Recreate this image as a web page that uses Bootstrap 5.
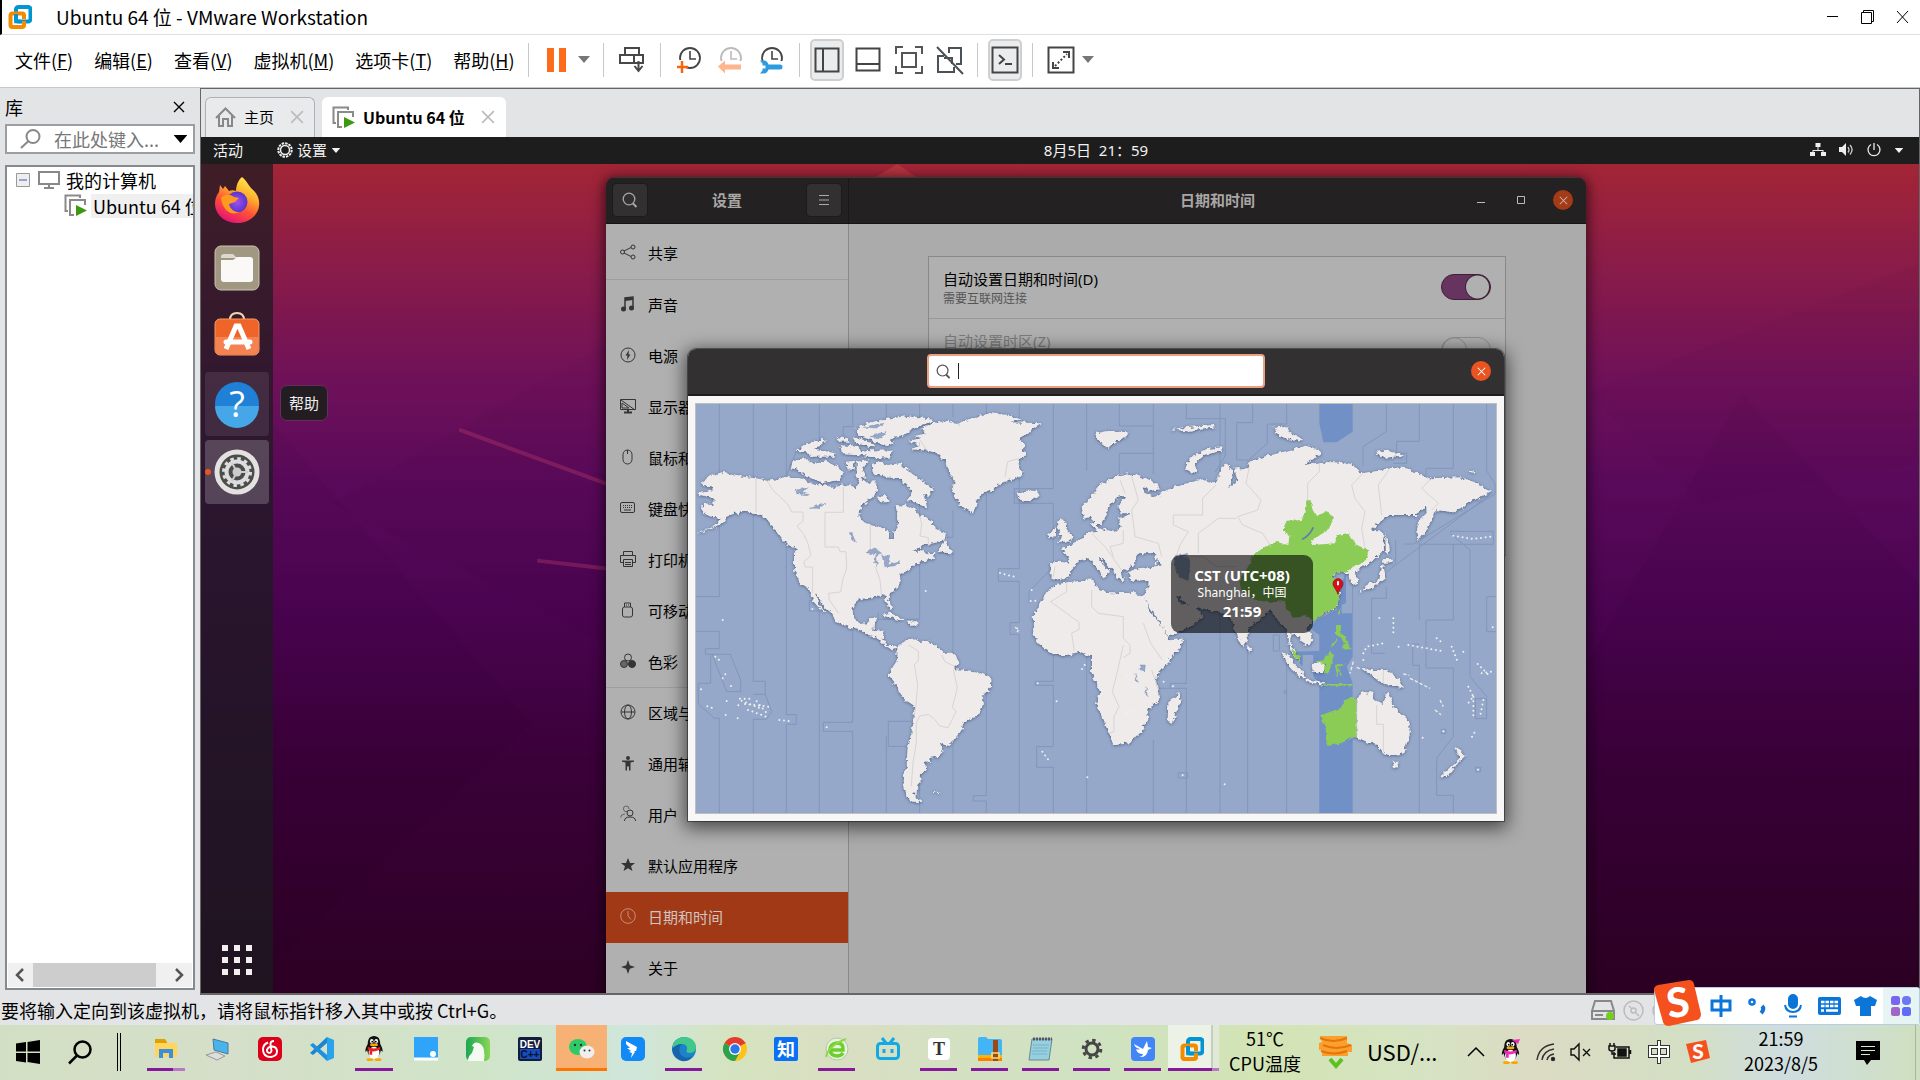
<!DOCTYPE html>
<html lang="zh-CN">
<head>
<meta charset="utf-8">
<meta name="viewport" content="width=device-width, initial-scale=1">
<title>Ubuntu 64 位 - VMware Workstation</title>
<link href="https://cdn.jsdelivr.net/npm/bootstrap@5.3.0/dist/css/bootstrap.min.css" rel="stylesheet">
<style>
:root{--win:"Open Sans","Noto Sans CJK SC",sans-serif;--gst:"Noto Sans","Noto Sans CJK SC",sans-serif}
body{font-family:var(--win);font-size:18px;line-height:24px;color:#000;background:#e3e4e6;overflow:hidden}
svg{display:block;flex:none;overflow:visible}
button{border:0;background:none;padding:0;color:inherit;font:inherit}
a{color:inherit;text-decoration:none}
.titlebar{height:35px;border-bottom:1px solid #dfdfdf;background:#fff;border-left:2px solid #000;padding-left:6px}
.titlebar span,.menubar a,.treetext,.hint,.searchfield{font-family:"Noto Sans CJK SC",sans-serif}
.titlebar span{font-size:19px}
.winctl{gap:20px;padding-right:10px}
.menubar{height:53px;background:#fff;border-bottom:1px solid #c8c8c8;padding-bottom:2px}
.menus{gap:21px;padding-left:15px;width:528px}
.vsep{width:1px;height:34px;background:#c9c9c9;flex:none}
.toolset{display:flex;align-items:center;gap:7px;padding:0 11px}
.toolset.tight{padding:0 10px}
.toolset.drop{gap:2px}
.tool{width:34px;height:42px;display:flex;align-items:center;justify-content:center}
.caretbtn{width:16px;display:flex;justify-content:center}
.tool.pressed{background:#ebecee;border:2px solid #cfcfcf;border-radius:5px}
.library{width:200px;padding:6px 5px 5px}
.libhead{height:26px;padding-right:6px}
.searchwrap{height:30px;border:2px solid #9b9fa4;background:#fff;padding:0 5px 0 13px;margin-bottom:11px;gap:13px}
.searchfield{border:0;outline:0;width:104px;font-size:18px;padding:0;color:#777;line-height:24px}
.searchfield::placeholder{color:#777;opacity:1}
.treebox{border:2px solid #858a91;background:#fff;overflow:hidden}
.treerow{height:26px;white-space:nowrap}
.pcname{padding-left:2px}
.sel{background:#f0f0f0;padding-left:2px}
.hbar{height:24px;background:#f0f0f0;margin:0 1px 1px}
.hthumb{width:123px;background:#cdcdcd}
.console{border:1px solid #666;border-bottom-width:2px;border-left-width:1px}
.tabstrip{height:48px;padding:8px 0 0 4px;gap:7px;font-size:15px}
.vmtab{height:40px;border:1px solid #aeb1b4;border-bottom:0;border-radius:6px 6px 0 0;background:#e9eaec;padding:0 10px 0 9px;font-family:"Noto Sans CJK SC",sans-serif}
.vmtab.on{background:#fff;border-color:#fff;font-weight:700;font-size:16px}
.guest{font-family:var(--gst);font-size:15px;line-height:20px}
.gtop{height:27px;background:#1d1d1d;color:#f2f2f2;display:grid;grid-template-columns:72px 1fr auto 1fr;align-items:center}
.gtray{gap:13px;padding-right:15px}
.desk{background:linear-gradient(180deg,#a32536 0,#8a1c48 12%,#6f1159 26%,#5a0a5a 38%,#4b0451 53%,#3a0139 72%,#2d0024 100%);overflow:hidden;position:relative}
.wallart{position:absolute;inset:0;width:100%;height:100%}
.dock{width:72px;background:rgba(29,27,32,.74);padding:4px 4px 18px;gap:4px;position:relative}
.dockitem{width:64px;height:64px;border-radius:4px;display:flex;align-items:center;justify-content:center;position:relative}
.dockitem.hov{background:rgba(255,255,255,.09)}
.dockitem.act{background:rgba(255,255,255,.2)}
.dockitem.act::before{content:"";position:absolute;left:0;width:6px;height:6px;border-radius:50%;background:#e95420}
.tipbox{position:absolute;left:79px;top:221px;z-index:3;background:#231d21;color:#eee;border:1px solid #60305c;border-radius:7px;padding:7px 8px;white-space:nowrap}
.work{position:relative;min-width:0}
.setwin{width:980px;margin:13px auto 0;border-radius:9px 9px 0 0;overflow:hidden;box-shadow:0 3px 12px 3px rgba(0,0,0,.55);position:relative;height:calc(100% - 13px)}
.sethead{height:47px;background:#242122;color:#a9a7a5;font-weight:700;border-bottom:1px solid #161415;border-top:1px solid #3b3839}
.hleft{width:243px;padding:0 7px;border-right:1px solid #191718}
.hbtn{width:34px;height:32px;border-radius:4px;background:#333031;display:flex;align-items:center;justify-content:center;box-shadow:0 0 0 1px #1d1b1c}
.winbtns{padding-right:13px}
.closebtn{width:20px;height:20px;border-radius:50%;background:#a33b17;display:flex;align-items:center;justify-content:center}
.slist{width:243px;background:#b0b0b0;border-right:1px solid #898989;padding-top:3px;flex:none}
.srow{height:51px;padding:0 14px;display:flex;align-items:center;gap:12px;color:#000;white-space:nowrap}
.srow.first{height:53px}
.srow svg{color:#343434;margin-top:-2px}
.line{border-bottom:1px solid #9e9e9e}
.srow.cur{background:#a13916;color:#cfc4c0}
.srow.cur svg{color:#c88e7a}
.pane{background:#ababab;padding:32px 80px 0 79px}
.optbox{border:1px solid #888;background:#b0b0b0;height:300px}
.optrow{height:62px;padding:0 14px;border-bottom:1px solid #999}
.optrow label{padding-top:2px}
.optrow.dim{color:#7b7b7b;padding-top:10px}
.form-switch .gsw{width:50px;height:26px;margin:0;border:1px solid #3d2139;background-color:#66345e;background-size:25px 25px;background-image:radial-gradient(circle at 50% 50%,#b0b0b0 11px,#3d2139 12px,transparent 13px);box-shadow:none;display:block}
.form-switch .gsw.off{background-color:#b0b0b0;border-color:#8f8f8f;opacity:1;background-image:radial-gradient(circle at 50% 50%,#b0b0b0 11px,#8f8f8f 12px,transparent 13px)}
.tzdlg{position:absolute;left:50%;top:185px;width:816px;margin-left:-408px;border-radius:8px 8px 0 0;background:#f7f7f7;box-shadow:0 0 0 1px rgba(0,0,0,.4),0 4px 18px 3px rgba(0,0,0,.6);z-index:2}
.tzhead{height:47px;background:#333031;border-radius:8px 8px 0 0;border-bottom:2px solid #1e1c1d;display:grid;grid-template-columns:1fr 338px 1fr;align-items:center}
.tzsearch{height:34px;background:#fff;border:2px solid #ee9f82;border-radius:4px;padding-left:7px;gap:7px}
.tzsearch input{border:0;outline:0;width:290px;font-size:15px;padding:0;height:22px}
.tzclose{background:#e95420;margin-right:13px}
.caretbar{width:1px;height:16px;background:#222}
.mapwrap{margin:7px;border:1px solid #c0bfbd;position:relative;overflow:hidden}
.mapwrap>svg{width:100%;height:auto}
.tztip{position:absolute;left:475px;top:151px;width:142px;height:78px;border-radius:9px;background:rgba(0,0,0,.6);color:#fff;padding:11px 0;text-align:center;line-height:18px}
.tztip span,.tztip b{display:block}
.sub{font-size:12px}
.statusbar{height:30px;position:relative}
.hint{padding-left:1px}
.devs{margin-right:247px}
.ime{position:absolute;right:0;top:-8px;height:38px;width:266px;z-index:5}
.imebody{background:#fff;border:1px solid #b8cde0;border-radius:3px;justify-content:flex-end}
.imebody button{width:36px;height:36px;display:flex;align-items:center;justify-content:center;color:#0b75d8;flex:none}
.imelogo{position:absolute;left:0;top:-7px}
.taskbar{height:55px;background:linear-gradient(90deg,#d3dfc4 0,#d5dfc9 12%,#d0e4c8 25%,#cfe6da 33%,#d5e3c0 38%,#d9dfc2 44%,#cfe2c2 56%,#d3e4b4 66%,#d6e3c3 74%,#dbdbc3 80%,#d3dfc4 88%,#cfdde0 93%,#cfe0c0 100%)}
.taskbar>*{flex:none}
.startarea{width:140px;padding-bottom:2px}
.tb{width:51px;height:46px;border-bottom:3px solid transparent;position:relative;display:flex;align-items:center;justify-content:center;padding-top:4px}
.tb.pin{width:52px}
.tb.open::after{content:"";position:absolute;left:7px;right:7px;bottom:-3px;height:3px;background:#86189a}
.tb.many::after{background:linear-gradient(90deg,#86189a 68%,#b778c5 68%)}
.tb.alert-on{background:#f7b174;border-color:#fd7500}
.tb.front{background:linear-gradient(90deg,#ecf2e5 43px,#c5cfc0 43px,#c5cfc0 45px,#dfe9d5 45px)}
.tb.front::after{left:0;right:0;background:linear-gradient(90deg,#86189a 44px,#b778c5 44px)}
.trayt{font-family:"Noto Sans CJK SC",sans-serif;font-size:18px;line-height:25px;text-align:center;padding-top:1px}
.news{width:156px;padding:0 0 4px 8px;gap:14px;font-family:"Noto Sans CJK SC",sans-serif;font-size:22px}
.trayicons{width:243px;color:#111;padding-bottom:2px}
</style>
<script src="https://cdn.jsdelivr.net/npm/bootstrap@5.3.0/dist/js/bootstrap.bundle.min.js"></script>
</head>
<body class="d-flex flex-column vh-100">
<svg width="0" height="0" class="position-absolute" aria-hidden="true">
<defs>
<symbol id="vmw" viewBox="0 0 24 24"><rect x="8" y="2" width="14.500" height="14.500" rx="2.500" fill="none" stroke="#0095d3" stroke-width="4"/><path d="M8 8.500H4A2 2 0 0 0 2.500 10v10A2 2 0 0 0 4 22h10a2 2 0 0 0 2-2v-4" fill="none" stroke="#f38b00" stroke-width="4"/><path d="M8 8.500h6a2 2 0 0 1 2 2V14" fill="none" stroke="#f38b00" stroke-width="4"/><path d="M8 9v7.500h5" fill="none" stroke="#0095d3" stroke-width="3.600"/></symbol>
<symbol id="mag" viewBox="0 0 16 16"><circle cx="7" cy="7" r="5.800" fill="none" stroke="currentColor" stroke-width="1.300"/><path d="M11 11.500l3.500 3.500" stroke="currentColor" stroke-width="2"/></symbol>
<symbol id="vmrun" viewBox="0 0 23 23"><path d="M4 17H1.500V1.500H16V4" fill="none" stroke="#8a8a8a" stroke-width="2"/><path d="M10 21H6V6h15v5" fill="none" stroke="#8a8a8a" stroke-width="2"/><path d="M12 11l11 5.500L12 22z" fill="#3d9a10"/></symbol>
<symbol id="ex" viewBox="0 0 12 12"><path d="M1 1l10 10M11 1L1 11" stroke="currentColor" stroke-width="1.400"/></symbol>
<symbol id="clk" viewBox="0 0 24 28"><circle cx="13" cy="12" r="10" fill="none" stroke="currentColor" stroke-width="1.800"/><path d="M13 5v8h6" fill="none" stroke="currentColor" stroke-width="1.600"/></symbol>
<symbol id="down" viewBox="0 0 12 7"><path d="M0 0h12L6 7z" fill="currentColor"/></symbol>
<symbol id="penguin" viewBox="0 0 20 28"><path d="M10 0c5 0 7 4 7 9 2 3 3 7 2.600 9l-2-2c-.5 4-3 9-7.600 9S3 20 2.400 16l-2 2C0 16 1 12 3 9c0-5 2-9 7-9z" fill="#111"/><ellipse cx="10" cy="19" rx="6" ry="7" fill="#fff"/><ellipse cx="7.500" cy="6" rx="2" ry="2.600" fill="#fff"/><ellipse cx="12.500" cy="6" rx="2" ry="2.600" fill="#fff"/><circle cx="8" cy="6.300" r="1"/><circle cx="12" cy="6.300" r="1"/><ellipse cx="10" cy="10" rx="4.500" ry="1.500" fill="#f7a700"/><path d="M3 12q7 4 14 0v3q-7 3-9 2v4H5v-5l-2-1z" fill="currentColor"/><ellipse cx="5.500" cy="26.500" rx="4" ry="1.500" fill="#f7a700"/><ellipse cx="14.500" cy="26.500" rx="4" ry="1.500" fill="#f7a700"/></symbol>
</defs>
</svg>

<header class="titlebar d-flex align-items-center justify-content-between">
 <div class="d-flex align-items-center"><svg width="24" height="24" class="me-4"><use href="#vmw"/></svg><span>Ubuntu 64 位 - VMware Workstation</span></div>
 <div class="winctl d-flex align-items-center">
  <button aria-label="最小化"><svg width="15" height="14"><path d="M2 6.500h11" stroke="#000"/></svg></button>
  <button aria-label="还原"><svg width="15" height="14"><path d="M3.500 2.500v-2h10v11h-2M1.500 2.500h10v11h-10z" fill="none" stroke="#000"/></svg></button>
  <button aria-label="关闭"><svg width="15" height="14"><path d="M2 1l11 12M13 1L2 13" stroke="#000"/></svg></button>
 </div>
</header>

<nav class="menubar d-flex align-items-center">
 <div class="menus d-flex"><a href="#">文件(<u>F</u>)</a><a href="#">编辑(<u>E</u>)</a><a href="#">查看(<u>V</u>)</a><a href="#">虚拟机(<u>M</u>)</a><a href="#">选项卡(<u>T</u>)</a><a href="#">帮助(<u>H</u>)</a></div>
 <i class="vsep"></i>
 <div class="toolset drop">
 <button class="tool" aria-label="挂起"><svg width="20" height="26"><path d="M0 1h7v24H0zM12 1h7v24h-7z" fill="#fd6b1c"/></svg></button>
 <button class="caretbtn" aria-label="电源选项"><svg width="12" height="7" color="#777"><use href="#down"/></svg></button>
 </div>
 <i class="vsep"></i>
 <div class="toolset">
 <button class="tool" aria-label="发送按键"><svg width="26" height="26" fill="none" stroke="#484848" stroke-width="2"><path d="M6 1h14v7H6zM1 8h14v8H1zM15 8h9v8h-9M19.500 14v10M15.500 19l4 5 4-5"/></svg></button>
 </div>
 <i class="vsep"></i>
 <div class="toolset">
 <button class="tool" aria-label="拍摄快照"><svg width="24" height="28" color="#444"><use href="#clk"/><path d="M0 14h9v10H0z" fill="#fff"/><path d="M5 15v12M0 21h11" stroke="#f5660f" stroke-width="2.500"/></svg></button>
 <button class="tool" aria-label="恢复快照"><svg width="24" height="28" color="#bbb"><use href="#clk"/><path d="M0 15h24v11H0z" fill="#fff"/><path d="M0 20.500l7-6v4h16v5H7v4z" fill="#ffb48c"/></svg></button>
 <button class="tool" aria-label="管理快照"><svg width="24" height="28" color="#444"><use href="#clk"/><path d="M0 15h24v11H0z" fill="#fff"/><path d="M1 14.500h4q3 0 4.500 4H21a2.500 2.500 0 0 1 0 5H9.500q-1.500 4-4.500 4H1l2.500-3v-2h3v-3h-3v-2z" fill="#2d9be0"/></svg></button>
 </div>
 <i class="vsep"></i>
 <div class="toolset tight">
 <button class="tool pressed" aria-label="显示库"><svg width="26" height="26" fill="none" stroke="#444" stroke-width="2"><path d="M1.500 1.500h23v23h-23zM9 1.500v23"/></svg></button>
 <button class="tool" aria-label="缩略图栏"><svg width="26" height="26" fill="none" stroke="#444" stroke-width="2"><path d="M1.500 1.500h23v22h-23zM1 17h24"/></svg></button>
 <button class="tool" aria-label="全屏"><svg width="28" height="28" fill="none" stroke="#555" stroke-width="2"><path d="M1 8V1h7M20 1h7v7M27 20v7h-7M8 27H1v-7M7 7h14v14H7z"/></svg></button>
 <button class="tool" aria-label="Unity"><svg width="28" height="28" fill="none" stroke="#4a5257" stroke-width="2"><path d="M1 1l26 27M12 2h13v16h-5M13 7V2M8 10H2v16h16v-5M8 12h8v6"/></svg></button>
 </div>
 <i class="vsep"></i>
 <div class="toolset tight">
 <button class="tool pressed" aria-label="控制台"><svg width="28" height="28" fill="none" stroke="#444" stroke-width="2"><path d="M1.500 1.500h25v25h-25zM8 9l5 4.500L8 18M14 18h7"/></svg></button>
 </div>
 <i class="vsep"></i>
 <div class="toolset drop">
 <button class="tool" aria-label="拉伸"><svg width="28" height="28" fill="none" stroke="#444" stroke-width="2"><path d="M1.500 1.500h25v25h-25zM16 6h6v6M6 16v6h6"/><path d="M8 20L20 8" stroke-dasharray="2 2"/></svg></button>
 <button class="caretbtn" aria-label="拉伸选项"><svg width="12" height="7" color="#777"><use href="#down"/></svg></button>
 </div>
</nav>

<main class="d-flex flex-fill" style="min-height:0">
 <aside class="library d-flex flex-column">
  <div class="libhead d-flex justify-content-between align-items-center mb-1"><span class="treetext">库</span><button class="p-1" aria-label="关闭库"><svg width="12" height="12"><use href="#ex"/></svg></button></div>
  <label class="searchwrap d-flex align-items-center"><svg width="21" height="20" viewBox="0 0 21 20" fill="none" stroke="#888" stroke-width="2"><circle cx="13" cy="7.500" r="6.500"/><path d="M8.500 12L1 19"/></svg><input class="searchfield" type="text" placeholder="在此处键入..." aria-label="搜索库"><svg width="15" height="8" viewBox="0 0 12 7" class="ms-auto"><use href="#down"/></svg></label>
  <div class="treebox d-flex flex-column flex-fill">
   <div class="treerow d-flex align-items-center"><svg width="14" height="14" viewBox="0 0 14 14" style="margin-left:9px"><path d="M.5.500h13v13H.5z" fill="#eee" stroke="#999"/><path d="M3 7h8" stroke="#3b5ba5"/></svg><svg width="22" height="18" viewBox="0 0 22 18" fill="none" stroke="#888" stroke-width="2" class="ms-2 me-1"><path d="M1 1h20v12H1zM11 13v3M6 17h10"/></svg><span class="treetext pcname">我的计算机</span></div>
   <div class="treerow d-flex align-items-center"><svg width="23" height="23" style="margin-left:57px"><use href="#vmrun"/></svg><span class="treetext sel ms-1 flex-fill">Ubuntu 64 位</span></div>
   <div class="flex-fill"></div>
   <div class="hbar d-flex align-items-center"><svg width="25" height="14"><path d="M15 1L9 7l6 6" fill="none" stroke="#555" stroke-width="2.500"/></svg><div class="hthumb h-100"></div><svg width="30" height="14"><path d="M20 1l6 6-6 6" fill="none" stroke="#555" stroke-width="2.500"/></svg></div>
  </div>
 </aside>

 <section class="console d-flex flex-column flex-fill" style="min-width:0">
  <div class="tabstrip d-flex">
   <div class="vmtab d-flex align-items-center"><svg width="21" height="20" fill="none" stroke="#888" stroke-width="2"><path d="M1 11L10.500 1.500 20 11M4 9v10h4v-7h5v7h4V9"/></svg><a href="#" class="mx-2">主页</a><button class="ms-2" aria-label="关闭主页"><svg width="14" height="14" color="#bbb"><use href="#ex"/></svg></button></div>
   <div class="vmtab on d-flex align-items-center"><svg width="23" height="23"><use href="#vmrun"/></svg><a href="#" class="ps-1 ms-1 me-3">Ubuntu 64 位</a><button aria-label="关闭 Ubuntu"><svg width="14" height="14" color="#bbb"><use href="#ex"/></svg></button></div>
  </div>
  <div class="guest d-flex flex-column flex-fill" style="min-height:0">
   <div class="gtop">
    <a href="#" class="ps-2 ms-1">活动</a>
    <div class="d-flex align-items-center ps-1"><svg width="16" height="16" viewBox="0 0 16 16" fill="none" stroke="#eee"><circle cx="8" cy="8" r="6.700" stroke-width="2" stroke-dasharray="2.500 1"/><circle cx="8" cy="8" r="4.500" stroke-width="1.500"/></svg><a href="#" class="px-1">设置</a><svg width="10" height="5" viewBox="0 0 12 7"><use href="#down"/></svg></div>
    <span>8月5日&nbsp; 21：59</span>
    <div class="gtray d-flex align-items-center justify-content-end"><svg width="16" height="14" fill="#eee"><path d="M5.500 0h5v4h-5zM0 9h5v4H0zM11 9h5v4h-5zM7.500 4h1v3h5v2h-1V8h-9v1h-1V7h5z"/></svg><svg width="15" height="14"><path d="M0 4h3l4-4v13L3 9H0z" fill="#eee"/><path d="M9 4q2 3 0 5.500M11 2q4 4.500 0 9.500" stroke="#ccc" fill="none" stroke-width="1.300"/></svg><svg width="14" height="14" fill="none" stroke="#eee" stroke-width="1.300"><path d="M4 1.500a6 6 0 1 0 6 0M7 0v7"/></svg><svg width="10" height="5" viewBox="0 0 12 7"><use href="#down"/></svg></div>
   </div>
   <div class="desk d-flex flex-fill" style="min-height:0">
    <svg class="wallart" viewBox="0 0 1717 830" preserveAspectRatio="none"><path d="M72 260L330 560 72 800z" fill="#000" opacity=".025"/><path d="M130 340L405 180V480z" fill="#000" opacity=".02"/><path d="M1385 500L1540 230 1717 420V830H1385z" fill="#000" opacity=".03"/><path d="M1385 230L1717 100V300L1500 340z" fill="#000" opacity=".02"/><path d="M673 14L696 0l20 14z" fill="#d04a4a" opacity=".4"/><path d="M258 266L405 320M336 397L405 405" stroke="#a83268" stroke-width="4" opacity=".45"/></svg>
    <nav class="dock d-flex flex-column">
     <a class="dockitem" href="#" aria-label="Firefox"><svg width="46" height="48" viewBox="0 0 46 48"><defs><linearGradient id="ff" x1="0.800" x2=".3" y2="1"><stop offset="0" stop-color="#fff44f"/><stop offset=".35" stop-color="#ffb02e"/><stop offset=".65" stop-color="#ff5037"/><stop offset="1" stop-color="#e3107a"/></linearGradient><radialGradient id="fp"><stop offset="0" stop-color="#a050f0"/><stop offset="1" stop-color="#5a35c8"/></radialGradient></defs><path d="M28 1c5 4 6 8 10 12 5 4 8 10 7 17-1 10-11 17-22 17S2 40 1 29c0-7 2-10 4-13l1-7 3 4 2-3 4 5c2-1 5-1 7 0 0-5 2-11 6-14z" fill="url(#ff)"/><circle cx="23" cy="26" r="10.500" fill="url(#fp)"/><path d="M7 22c4-4 9-4 13-1l5 1-4 4-6 2c1 5 6 9 11 8-8 4-17 0-19-14z" fill="#ff9a1f"/></svg></a>
     <a class="dockitem" href="#" aria-label="文件"><svg width="46" height="46"><rect x="1" y="1" width="44" height="44" rx="6" fill="#a09880" stroke="#c9c4b4"/><path d="M7 12q0-3 3-3h9l4 4H7z" fill="#ded9cf"/><path d="M7 15h12l4-3h13q3 0 3 3v19q0 3-3 3H10q-3 0-3-3z" fill="#faf9f7"/></svg></a>
     <a class="dockitem" href="#" aria-label="软件中心"><svg width="46" height="44" class="mb-1"><path d="M16 8q0-7 7-7t7 7" fill="none" stroke="#f3d5ac" stroke-width="2"/><rect x="1" y="7" width="44" height="36" rx="5" fill="#ee6429" stroke="#f79a67"/><path d="M2 25h42v14q0 3-4 3H6q-4 0-4-3z" fill="#f58251"/><path d="M12 37L22 14h3l10 23" fill="none" stroke="#fff" stroke-width="5"/><path d="M12 30h24" stroke="#fff" stroke-width="5" stroke-linecap="round"/></svg></a>
     <a class="dockitem hov" href="#" aria-label="帮助"><svg width="46" height="46"><circle cx="23" cy="23" r="22" fill="#1f80d6"/><path d="M1 25h44a22 22 0 0 1-44 0z" fill="#46a7e8"/><text x="23" y="36" text-anchor="middle" font-family="Open Sans" font-size="36" fill="#fff">?</text></svg></a>
     <a class="dockitem act" href="#" aria-label="设置"><svg width="46" height="46"><circle cx="23" cy="23" r="20" fill="#4c4c4c" stroke="#e3e2e0" stroke-width="5"/><circle cx="23" cy="23" r="13.500" fill="none" stroke="#ddd" stroke-width="3" stroke-dasharray="3.500 3.560"/><circle cx="23" cy="23" r="10.500" fill="none" stroke="#ddd" stroke-width="4"/><circle cx="23" cy="23" r="4.500" fill="#ccc"/><path d="M23 23h11M23 23l-5-9M23 23l-5 9" stroke="#ccc" stroke-width="2"/></svg></a>
     <div class="tipbox" role="tooltip">帮助</div>
     <button class="mt-auto mx-auto" aria-label="显示应用程序"><svg width="30" height="30" viewBox="0 0 30 30" fill="#f2f0ee"><path d="M0 0h6v6H0zM12 0h6v6h-6zM24 0h6v6h-6zM0 12h6v6H0zM12 12h6v6h-6zM24 12h6v6h-6zM0 24h6v6H0zM12 24h6v6h-6zM24 24h6v6h-6z"/></svg></button>
    </nav>
    <div class="work flex-fill">
     <div class="setwin d-flex flex-column">
      <div class="sethead d-flex">
       <div class="hleft d-flex align-items-center justify-content-between"><button class="hbtn" aria-label="搜索"><svg width="16" height="16"><use href="#mag"/></svg></button><span>设置</span><button class="hbtn" aria-label="菜单"><svg width="10" height="11" stroke="#aaa"><path d="M0 .5h10M0 5h10M0 9.500h10" stroke-width="1.200"/></svg></button></div>
       <div class="flex-fill position-relative d-flex align-items-center justify-content-center"><span>日期和时间</span>
        <div class="winbtns position-absolute end-0 d-flex align-items-center gap-4"><button class="px-1" aria-label="最小化"><svg width="8" height="8"><path d="M0 6.500h8" stroke="#bbb"/></svg></button><button class="px-1" aria-label="最大化"><svg width="8" height="8"><path d="M.5.500h7v7h-7z" fill="none" stroke="#bbb"/></svg></button><button class="closebtn" aria-label="关闭"><svg width="9" height="9" viewBox="0 0 12 12" color="#c5b4ae"><use href="#ex"/></svg></button></div></div>
      </div>
      <div class="d-flex flex-fill" style="min-height:0">
       <div class="slist">
        <a href="#" class="srow first line"><svg width="16" height="16" fill="none" stroke="currentColor"><circle cx="2.500" cy="8" r="2"/><circle cx="13" cy="3" r="2"/><circle cx="13" cy="13" r="2"/><path d="M4 7l7-3.500M4 9l7 3.500"/></svg>共享</a>
        <a href="#" class="srow"><svg width="16" height="16"><path d="M5 13V2l8-1v11" fill="none" stroke="currentColor" stroke-width="1.500"/><path d="M5 2l8-1v3L5 5z" fill="currentColor"/><circle cx="3.500" cy="13" r="2.500" fill="currentColor"/><circle cx="11.500" cy="12" r="2.500" fill="currentColor"/></svg>声音</a>
        <a href="#" class="srow"><svg width="16" height="16"><circle cx="8" cy="8" r="7" fill="none" stroke="currentColor"/><path d="M9 3L5.500 8.500h2L7 13l3.500-5.500h-2z" fill="currentColor"/></svg>电源</a>
        <a href="#" class="srow"><svg width="16" height="16" fill="none" stroke="currentColor"><path d="M.5 1.500h15v10H.5zM1 2l14 10M2 5v5h7z"/><path d="M4 14.500h8M8 11v3" stroke-width="2"/></svg>显示器</a>
        <a href="#" class="srow"><svg width="16" height="16" fill="none" stroke="currentColor"><rect x="3" y="1" width="9" height="14" rx="4.500"/><path d="M7.500 1v4"/></svg>鼠标和触摸板</a>
        <a href="#" class="srow"><svg width="16" height="16" fill="none" stroke="currentColor"><rect x=".5" y="2.500" width="14" height="10" rx="1.500"/><path d="M3 5.500h10M3 7.500h10" stroke-dasharray="1 1"/><path d="M4 10h7"/></svg>键盘快捷键</a>
        <a href="#" class="srow"><svg width="16" height="16" fill="none" stroke="currentColor"><path d="M3.500 4V.5h9V4M3 11.500H.5v-7h15v7H13M3.500 8.500h9v7h-9zM5 11.500h6M5 13.500h6"/></svg>打印机</a>
        <a href="#" class="srow"><svg width="16" height="16" fill="none" stroke="currentColor"><rect x="2.500" y="5" width="10" height="10" rx="2"/><path d="M4.500 5V1h6v4M6 3h1M8 3h1"/></svg>可移动介质</a>
        <a href="#" class="srow line"><svg width="16" height="16" stroke="currentColor"><circle cx="8" cy="4.500" r="3.500" fill="none"/><circle cx="4" cy="11" r="3.500" fill="#666"/><circle cx="12" cy="11" r="3.500" fill="currentColor"/></svg>色彩</a>
        <a href="#" class="srow"><svg width="16" height="16" fill="none" stroke="currentColor"><circle cx="8" cy="8" r="7"/><ellipse cx="8" cy="8" rx="3.500" ry="7"/><path d="M1.500 8h13"/></svg>区域与语言</a>
        <a href="#" class="srow"><svg width="16" height="16" fill="currentColor"><circle cx="8" cy="3" r="2"/><path d="M2 5.500h12v1.300l-3.500.7v8H9v-4H7v4H5.500v-8L2 6.800z"/></svg>通用辅助功能</a>
        <a href="#" class="srow"><svg width="16" height="16" fill="none" stroke="currentColor"><circle cx="10" cy="7" r="3"/><path d="M4.500 15q0-4 5.500-4t5.500 4"/><path d="M7 5.500A2.800 2.800 0 1 1 9 3M.5 11.500Q1 8 5 8" opacity=".6"/></svg>用户</a>
        <a href="#" class="srow"><svg width="16" height="16" fill="currentColor"><path d="M8 1l2 5h5l-4 3.200L12.500 14 8 11.200 3.500 14 5 9.200 1 6h5z"/></svg>默认应用程序</a>
        <a href="#" class="srow cur"><svg width="16" height="16" fill="none" stroke="currentColor"><circle cx="8" cy="8" r="7.300"/><path d="M8 3v5l3 3.500"/></svg>日期和时间</a>
        <a href="#" class="srow"><svg width="16" height="16" fill="currentColor"><path d="M8 1l1.800 5.200L15 8 9.800 9.800 8 15 6.200 9.800 1 8l5.200-1.800z"/></svg>关于</a>
       </div>
       <div class="pane flex-fill">
        <div class="optbox">
         <div class="optrow d-flex align-items-center justify-content-between"><label for="sw1" class="lh-sm">自动设置日期和时间(D)<br><span class="sub" style="color:#555">需要互联网连接</span></label><div class="form-switch p-0 m-0"><input class="form-check-input gsw" type="checkbox" role="switch" id="sw1" checked></div></div>
         <div class="optrow dim d-flex align-items-start justify-content-between"><label for="sw2">自动设置时区(Z)</label><div class="form-switch p-0 pt-2"><input class="form-check-input gsw off" type="checkbox" role="switch" id="sw2"></div></div>
        </div>
       </div>
      </div>
     </div>

     <div class="tzdlg" role="dialog" aria-label="选择时区">
      <div class="tzhead"><span></span><label class="tzsearch d-flex align-items-center"><svg width="15" height="15" viewBox="0 0 16 16" color="#555"><use href="#mag"/></svg><i class="caretbar"></i><input type="text" aria-label="搜索城市"></label><button class="closebtn tzclose ms-auto" aria-label="关闭"><svg width="9" height="9" viewBox="0 0 12 12" color="#fff"><use href="#ex"/></svg></button></div>
      <div class="mapwrap">
<svg viewBox="18 42 2400 1227">
<defs><filter id="rough" x="-2%" y="-2%" width="104%" height="104%" color-interpolation-filters="sRGB"><feTurbulence type="fractalNoise" baseFrequency=".08" numOctaves="2" seed="4"/><feDisplacementMap in="SourceGraphic" scale="18" xChannelSelector="R" yChannelSelector="G" result="d"/><feDropShadow in="d" dx="0" dy="2" stdDeviation="5" flood-color="#3a4c70" flood-opacity=".8"/></filter>
<filter id="edge" color-interpolation-filters="sRGB"><feTurbulence type="fractalNoise" baseFrequency=".08" numOctaves="2" seed="4"/><feDisplacementMap in="SourceGraphic" scale="12" xChannelSelector="R" yChannelSelector="G"/></filter></defs>
<rect x="18" y="42" width="2400" height="1228" fill="#95a8c9"/>
<g fill="#7090c6"><path d="M1888 42h100v83l-48 32h-40l-12-57z"/><path d="M1955 580l13-35v95l-13 5v25h33v130l-18 30 18 50v390h-100v-390l-18-20v-65h-32v35l-38-45 88-2v-48l-28-20 20-25 60-30z"/></g>
<g fill="none" stroke="#8296bb" stroke-width="3">
<path d="M88 42v578H18M18 724h70v52H46v17h75l31 77v35H110L67 795M62 793v87H25v62l48 43h15v285M190 42v832h36v39h-36M226 913l19 52-16 23h-39v282M289 42v215l31-75 60-30M289 300v674h30v29h-30v267M388 100v532h-30v31h30M388 42v60M388 663v607M488 42v68h-28v80M488 720v277h-88v27h88v246M589 42v50M589 1040v230M665 994h-70v75h60M689 42v50M689 1100v170M689 330v358H565v-20M789 42v40M789 360v82h-30M743 490h46v780M889 42v30M889 310v907h-39v16h39v37M988 42v40M988 250v286M973 296v44h117M973 296h117V42M1090 340v190l-73 75v34M988 536h-63v38h63v124h-28v35h28v537M1090 795v79h-54v12h54v184h-50v62h50v138M1190 42v200M1190 800v470"/>
<path d="M1288 42v66h102M1390 42v210M1390 190h-102v60M1390 920v-25h100M1490 880h-50v15M1489 750v130M1489 895v375M1390 1050v220M1489 42v44h117v110l-30 50M1590 42v200M1688 42v56h-48v112h36l56-50v-58h58V42M1673 780v490M1590 660v610M1790 820v450M1750 735h18v48h-18zM1415 742h18v18h-18zM2089 42v83l-70 45v60M1988 580v90M2117 450v70M2188 42v112h-68v36h30v30h-40M2188 460v230M2188 826v444M2290 42v193h-82v30M2390 42v200l25 40v30l-245 150h-30M2405 310L2090 545M2280 430l60 50v380l52 62M2280 424h130v39H2188M2290 463v227h-82v144h82v205l-50 66v111h50v54M2089 590v35h-44v165h40M2168 762v64h22M2168 762h20M2390 620v105h28M2390 620h28M2356 926h34v60h-34zM2254 1018h14v13h-14zM2357 1132h15v13h-15zM1465 1148h27v16h-27zM1782 902h8v8h-8z"/>
</g>
<g fill="#efebeb" filter="url(#rough)">
<path d="M32 278L60 258 95 247 140 258 200 265 232 272 262 268 290 260 330 268 380 282 430 290 470 285 500 292 512 262 535 282 550 270 565 298 545 322 525 338 512 350 508 378 522 397 560 408 592 420 598 445 612 448 613 425 628 405 618 385 620 345 655 348 680 362 690 380 704 376 718 390 738 414 767 434 765 448 740 458 700 464 668 484 700 480 710 490 738 488 732 502 700 515 680 520 655 540 630 555 632 584 600 610 596 625 606 652 598 654 588 635 583 616 560 620 530 625 500 630 488 655 490 685 508 702 530 700 538 685 560 683 552 706 550 720 584 722 578 745 592 765 610 765 624 772 604 778 580 764 560 742 535 735 510 720 480 714 438 695 430 672 400 645 375 610 385 640 408 668 393 660 373 638 360 605 355 594 330 580 312 540 312 490 320 478 285 460 262 430 240 400 225 380 200 370 160 365 130 372 110 380 95 402 60 418 22 432 22 430 70 410 95 387 70 384 45 372 32 355 45 340 70 342 70 325 30 315 22 310 50 305 68 300 65 292 45 290Z"/>
<path d="M622 772L640 755 665 745 690 755 720 755 745 775 760 788 785 788 800 800 805 820 792 838 830 840 860 845 885 855 903 862 906 885 890 905 880 915 878 950 862 980 845 985 820 998 812 1025 795 1045 778 1068 750 1062 760 1085 745 1098 722 1100 720 1115 702 1120 708 1135 690 1155 698 1168 682 1185 680 1208 672 1215 698 1236 670 1235 650 1222 640 1195 642 1160 650 1130 652 1080 664 1030 670 985 672 950 650 935 632 915 615 880 598 858 602 840 622 810Z"/>
<path d="M655 152L690 145 672 138 710 130 690 118 735 98 780 92 800 102 850 82 900 70 960 75 995 90 960 97 1010 98 1055 100 1020 125 1003 135 990 150 1010 165 995 180 1012 195 985 212 990 240 998 255 975 268 930 280 915 298 875 312 860 335 850 368 820 355 800 330 785 295 792 270 775 240 768 215 745 190 710 182 665 178 690 165Z"/>
<path d="M497 118L530 100 580 88 650 78 715 85 730 92 690 108 652 125 635 140 600 145 615 158 590 168 560 160 530 145 510 140ZM310 210L350 205 372 222 410 214 440 228 460 250 450 270 400 278 350 262 325 240 302 235ZM322 182L350 160 410 148 392 166 372 175 435 190 430 200 360 200 355 188ZM436 140L470 145 480 155 450 155ZM450 165L500 170 515 185 530 180 605 182 600 203 530 200 490 192 455 190ZM470 215L495 212 490 240 472 238ZM500 215L535 210 520 240 530 262 500 268ZM545 222L570 215 590 225 630 220 668 252 732 298 715 318 700 312 712 352 685 342 650 328 668 308 655 290 630 268 590 262 548 250ZM560 320L590 318 600 335 575 338ZM485 138L525 150 555 165 540 172 500 160Z" />
<path d="M980 308L1005 302 1040 302 1048 318 1020 334 988 330ZM743 482L765 450 788 490 760 488ZM575 675L600 668 645 690 625 690ZM655 695L680 693 690 703 655 705ZM1212 130L1260 122 1320 128 1290 150 1255 175 1230 160ZM1485 240L1500 205 1545 178 1598 172 1595 182 1545 195 1515 220 1520 250ZM1750 110L1790 112 1800 128 1840 150 1810 152 1770 138ZM1445 118L1480 112 1570 105 1575 112 1500 125ZM2055 185L2090 182 2150 195 2080 205ZM2330 245L2350 240 2355 248ZM1110 385L1125 390 1130 420 1152 445 1130 458 1100 458 1115 440 1100 412ZM1075 430L1098 415 1098 442 1075 445ZM735 1205h16v4h-16z"/>
<path d="M1080 518L1105 515 1133 518 1137 500 1112 480 1140 465 1162 452 1190 430 1220 425 1212 412 1200 400 1208 395 1225 415 1275 425 1292 410 1285 385 1330 370 1295 370 1285 350 1308 318 1285 320 1255 350 1250 375 1230 405 1215 405 1202 380 1182 386 1175 350 1200 325 1225 290 1270 262 1310 250 1350 260 1400 280 1412 298 1380 302 1360 292 1360 305 1395 320 1430 300 1450 292 1490 280 1540 268 1578 282 1595 230 1615 222 1632 250 1618 292 1642 272 1633 235 1670 235 1680 215 1720 200 1810 178 1840 165 1890 180 1895 190 1842 225 1900 215 1960 218 2000 230 2010 250 2070 242 2100 230 2150 235 2220 265 2310 262 2360 278 2405 305 2380 320 2335 335 2320 355 2280 370 2240 360 2225 390 2205 425 2185 452 2178 420 2185 395 2210 368 2208 350 2180 375 2100 375 2070 398 2045 418 2080 430 2082 480 2050 510 2020 530 1998 545 2002 580 1985 585 1980 560 1968 545 1935 550 1925 558 1945 570 1950 610 1940 650 1900 672 1872 690 1852 715 1868 740 1865 760 1845 765 1830 745 1805 730 1800 755 1820 790 1832 812 1815 808 1800 770 1790 720 1770 700 1740 660 1720 680 1675 715 1672 750 1658 768 1640 740 1625 690 1605 672 1530 655 1500 650 1462 615 1470 640 1515 652 1540 675 1520 700 1435 740 1428 725 1360 620 1375 592 1375 570 1325 572 1312 548 1345 535 1390 530 1418 525 1395 505 1400 490 1350 490 1330 520 1312 542 1295 540 1300 575 1280 560 1265 535 1245 515 1225 500 1242 530 1262 545 1248 555 1240 570 1235 552 1215 528 1195 505 1165 512 1148 535 1137 560 1105 572 1082 565Z"/>
<path d="M1100 582L1140 576 1210 568 1215 590 1260 610 1330 608 1362 620 1385 670 1425 720 1435 752 1480 745 1470 775 1440 810 1405 850 1398 870 1408 930 1372 960 1375 990 1355 1020 1320 1060 1270 1066 1260 1035 1238 990 1218 940 1230 905 1203 845 1203 800 1170 785 1135 795 1088 795 1050 765 1030 735 1028 680 1050 640 1075 602Z"/>
<path d="M1432 940L1468 908 1472 935 1448 998 1430 992ZM1672 762L1684 775 1680 786 1671 782ZM2105 1115L2128 1115 2115 1137ZM2295 1070L2328 1095 2305 1118 2270 1162 2252 1158 2282 1130 2308 1105ZM2012 832L2040 840 2090 840 2125 865 2142 896 2100 886 2070 878 2045 855ZM1773 788L1800 800 1850 865 1830 860 1800 830ZM1845 868L1900 875 1905 885 1850 876ZM1866 822L1900 818 1910 835 1895 850 1872 845ZM2078 520L2085 545 2085 565 2050 592 2008 606 2030 585 2068 570ZM2075 520L2092 500 2112 515ZM2085 430L2100 478 2088 495Z"/>
<path d="M2000 928L2015 905 2050 908 2048 925 2080 942 2090 900 2105 925 2112 955 2150 985 2163 1025 2140 1090 2105 1097 2080 1088 2055 1055 2030 1058 2000 1045 1980 1045Z"/>
</g>
<g fill="#8bcc57" filter="url(#edge)">
<path d="M1690 492L1755 455 1795 465 1798 435 1778 420 1790 392 1835 390 1842 372 1850 328 1862 328 1866 355 1878 378 1910 365 1932 382 1915 420 1890 435 1862 455 1870 465 1935 460 1940 435 1975 430 2000 465 2035 480 2028 510 1990 530 1970 545 1935 550 1925 558 1945 570 1958 578 1945 600 1950 620 1940 650 1900 672 1870 695 1850 675 1810 680 1788 655 1785 632 1740 638 1690 628 1655 600 1648 575 1680 520Z"/>
<path d="M1895 975L1950 955 1965 930 1988 920 2000 930V1042L1980 1045 1960 1058 1915 1068 1908 1060V1020L1897 990ZM1940 672L1952 655 1948 674ZM1806 780L1828 795 1834 815 1815 805ZM1870 815L1900 810 1920 783 1932 795 1915 850 1902 850 1908 825 1885 818ZM1938 705L1953 705 1952 730 1968 740 1982 780 1955 775 1965 760 1938 730ZM1935 825L1970 820 1945 832 1958 860 1945 845 1942 862ZM1900 882h85v5h-85zM1922 770l18-22 2 3-16 22z"/>
</g>
<g fill="#95a8c9" stroke="#6b80a8" filter="url(#edge)"><path d="M1457 500L1492 490 1500 515 1495 570 1468 562 1452 522ZM315 300l38-6-20 12 22 8-35-3zM358 355l50-15-22 15zM478 428l8 0 10 28-8-4zM528 488l25-14 22 16-15 3 2 35-8-10 4-25zM575 495l25 5-5 25 35-10-15 12-30 3zM1350 825l16 0-2 18-14-4zM1335 850l10 32-5-5zM1368 890l4 30-4-8zM520 112l60-12-20 14zM540 140l50-16-15 20z"/></g>
<path d="M1836 448q22-10 34-36" stroke="#5f7cb0" stroke-width="5" fill="none"/>
<g fill="none" stroke="#d3cfcf" stroke-width="2.500">
<path d="M198 266v100M230 270l18 30 45 42 12 24h34v27l-18 15 20 25 12 25 10 38-22 20 5 15h22v78M460 290v77h-55v104h40l5 14h18l2 50-12 35-6 36-36 4 2 20 28 40M541 402v75M556 530l14 40 5 48M690 378l5 25-5 35 25 5v25M655 765l30 18v30l-12 10 10 60-5 60-6 40M790 838l12 55-15 60 12 10-25 50-25-5-15-20-20-15-25 5-10 20v60l-10 60-5 70M755 795l10 20 30 15M690 150l20 30M945 260l8-45 35-10M1095 530l-5 30M1130 580v25l-48 30 85 62v22l-22 10 8 55M1205 600v50l20 20 75 10v65l20 20v25l-20 12M1300 765l-18 80-15 60 20 45-15 30v45l-15 5M1360 700l22 60 35 50M1385 840l20 60M1290 270l15 40M1325 260l20 70-20 30 10 80 70 20 10 40M1300 420v40l-40 10 10 30M1205 430l40 40 50 70M1578 285l-40 40v50l-88 0 0 30 45 20-25 40-10 30M1640 385h-55l-60 45 0 60M1678 230l-10 50 45 50-10 30-60 20 15 25 60 25 25 40M1888 220v25l-35 35v50M2020 250l-35 35 10 40 30 40-10 50 10 60M2100 235l-35 50 10 90M2225 265l-30 30 50 45-20 20M2080 840v40M2060 945v58h20v85M1480 500l60 0 40 30 60 0"/>
</g>
<path d="M2000 930v112" stroke="#aaa" stroke-width="2"/>
<g fill="none" stroke="#f3f1f1" stroke-width="6" stroke-linecap="round" stroke-dasharray="0 14">
<path d="M76 800l16 14M106 853l-8 12M123 888v1M33 898l6 6M52 949l24 8M107 975v1M143 985v1M110 933l6 6M268 990l38 4M410 1012v1M150 926h30M155 932l60 25M165 942l70 8M174 960l55 20M145 946v1M200 934l34 40M707 603v1M930 549l45 12M1043 880v1M1100 934v1M1057 1085l18 24M1184 825l-8 12M367 657v1M98 690l6 5M1430 780v54M1421 875v1M1449 889v1M1310 856v1M1310 968l14-6M1192 1162v1M1478 1156v1M1604 1183v1M2068 684v1M2110 685v50M2020 790l10-20 50-10M2020 810v1M2126 770v1M2155 765l110 20M2240 745l20 15M2285 770l20 50M2320 785v1M2363 822l35 35M2375 850l30-5M2408 712v1M2335 890l15 30-20 25M2350 920v70M2380 930l-10 50M2353 1028l-8 14M2260 1024v1M2198 1043v1M2364 1139v1M2290 437l60 10 60-8M1025 600v1M1022 633l26-2"/>
</g>
<path d="M2160 865l60 30M2250 930l10 20M2235 960l18 14M1990 815l-10 35M2000 832l10 4M2140 852l18 4M1397 500v45M975 712l12 6-6 8" stroke="#efebeb" stroke-width="4" stroke-dasharray="10 6" fill="none"/>
<g transform="translate(1944 567)"><path d="M0 46C-6 28-15 24-15 14a15 15 0 0 1 30 0C15 24 6 28 0 46z" fill="#d8101c" stroke="#8d0a12" stroke-width="2"/><rect x="-3" y="6" width="6" height="13" rx="2" fill="#fff"/></g>
</svg>
       <div class="tztip"><b>CST (UTC+08)</b><span class="sub">Shanghai，中国</span><b>21:59</b></div>
      </div>
     </div>
    </div>
   </div>
  </div>
 </section>
</main>

<footer class="statusbar d-flex align-items-center justify-content-between">
 <span class="hint">要将输入定向到该虚拟机，请将鼠标指针移入其中或按 Ctrl+G。</span>
 <div class="devs d-flex align-items-center gap-2"><svg width="24" height="20" fill="none" stroke="#888" stroke-width="2"><path d="M1 11L4 1h16l3 10v8H1zM1 11h22M4 15h8"/><circle cx="19" cy="16" r="4" fill="#7c2" stroke="none"/></svg><svg width="21" height="21" fill="none" stroke="#bbb" stroke-width="1.500"><circle cx="10.500" cy="10.500" r="9.500"/><circle cx="10.500" cy="10.500" r="2.500"/><path d="M6 6l2 2M13 13l3 3"/></svg><svg width="21" height="21" fill="none" stroke="#bbb" stroke-width="1.500"><circle cx="10.500" cy="10.500" r="9.500"/></svg></div>
 <div class="ime">
  <div class="imebody d-flex h-100 align-items-center">
   <button aria-label="中文"><svg width="22" height="22" fill="none" stroke="currentColor" stroke-width="3"><path d="M2 6h18v9H2zM11 0v22"/></svg></button>
   <button aria-label="标点"><svg width="18" height="18" fill="none" stroke="currentColor" stroke-width="2.500"><circle cx="4" cy="5" r="2.500"/><path d="M14 9q3 3-1 7" stroke-width="4"/></svg></button>
   <button aria-label="语音"><svg width="18" height="24" fill="none" stroke="currentColor" stroke-width="2"><rect x="5" y="1" width="8" height="13" rx="4" fill="currentColor"/><path d="M1 11q1 7 8 7t8-7M5 22.500h8"/></svg></button>
   <button aria-label="软键盘"><svg width="23" height="18"><rect width="23" height="18" rx="2" fill="currentColor"/><path d="M3 5h17M3 9h17" stroke="#fff" stroke-width="2.500" stroke-dasharray="3.500 1"/><path d="M3 13.500h3M8 13.500h12" stroke="#fff" stroke-width="2.500"/></svg></button>
   <button aria-label="皮肤"><svg width="23" height="20" fill="currentColor"><path d="M7 0q4.500 4 9 0l7 4-2 6h-4v10H6V10H2L0 4z"/></svg></button>
   <button aria-label="工具箱" style="background:#e7f4f4"><svg width="20" height="20"><rect width="9" height="9" rx="2.500" fill="#7667ee"/><rect x="11" width="9" height="9" rx="4" fill="#6b78f2"/><rect y="11" width="9" height="9" rx="2.500" fill="#a066c8"/><rect x="11" y="11" width="9" height="9" rx="2.500" fill="#5f6cf4"/></svg></button>
  </div>
  <svg class="imelogo" width="48" height="46"><path d="M0 10Q0 6 4 5L35 0q4 0 5 4l7 30q0 5-4 6l-28 6q-5 0-6-4z" fill="#f4511e"/><text x="24" y="37" text-anchor="middle" font-family="Lato" font-weight="900" font-size="41" fill="#fff" transform="rotate(-8 24 23)">S</text></svg>
 </div>
</footer>

<footer class="taskbar d-flex">
 <div class="startarea d-flex align-items-center">
  <button class="ms-3" aria-label="开始"><svg width="24" height="24"><path d="M0 3.500L10 2v9.500H0zM11.500 2L24 0v11.500H11.500zM0 13h10v9.500L0 21zM11.500 13H24v11l-12.500-2z"/></svg></button>
  <button class="ms-4 ps-1" aria-label="搜索"><svg width="24" height="24" fill="none" stroke="#000" stroke-width="2.500"><circle cx="14.500" cy="9.500" r="8"/><path d="M9 15.500L1 23.500"/></svg></button>
  <svg class="ms-4" width="5" height="38"><path d="M1.500 0v38M4.500 0v38" stroke="#000"/></svg>
 </div>
 <button class="tb pin open many" aria-label="文件资源管理器"><svg width="24" height="20"><path d="M1 0h10l2 3v3H1z" fill="#e0a100"/><path d="M1 4h22v14H1z" fill="#ffd65a"/><path d="M5 10h14v9h-4v-5H9v5H5z" fill="#3b8ede"/></svg></button>
 <button class="tb pin" aria-label="远程桌面"><svg width="24" height="22"><path d="M7 1l15 4v11L8 12z" fill="#49b3ec" stroke="#497ba0"/><path d="M0 17l10-3 9 4-8 4z" fill="#ddd" stroke="#999"/></svg></button>
 <button class="tb pin" aria-label="网易云音乐"><svg width="24" height="24"><rect width="24" height="24" rx="5" fill="#dd001b"/><path d="M16 4q-4 0-3.500 4l1 5.500a2.300 2.300 0 1 1-4-1.500q1-2.500 5-2.500 4.500.5 4.500 5t-6 5.500q-8 0-8-7.500 0-5 5-7" fill="none" stroke="#fff" stroke-width="1.900"/></svg></button>
 <button class="tb pin" aria-label="VS Code"><svg width="24" height="24"><path d="M17 0l7 3v18l-7 3z" fill="#2aa3ee"/><path d="M17 0v6L3 18l-3-2z" fill="#1a85d0"/><path d="M17 24v-6L3 6 0 8z" fill="#1f90dc"/></svg></button>
 <button class="tb pin open" aria-label="QQ" style="color:#e8231f"><svg width="20" height="25"><use href="#penguin"/></svg></button>
 <button class="tb pin" aria-label="桌面助手"><svg width="24" height="24"><path d="M0 0h24v21H0z" fill="#2ea4fb"/><path d="M0 22h24" stroke="#fff" stroke-width="3"/><circle cx="19" cy="17" r="3" fill="#fff"/></svg></button>
 <button class="tb pin" aria-label="飞鸽"><svg width="24" height="24"><defs><linearGradient id="gg"><stop stop-color="#1ba753"/><stop offset="1" stop-color="#8ad655"/></linearGradient></defs><rect width="24" height="24" rx="5" fill="url(#gg)"/><path d="M2 24q0-5 4-8l2-6-2-1q2-5 7-3 4 2 5 7 1 6 0 11z" fill="#f4faf2"/></svg></button>
 <button class="tb pin" aria-label="Dev-C++"><svg width="24" height="24"><rect width="24" height="24" rx="2" fill="#131d3b"/><path d="M2 12h20v10H2z" fill="#1a4bbd"/><text x="12" y="11" text-anchor="middle" font-size="10" font-weight="700" font-family="Liberation Sans" fill="#fff">DEV</text><text x="12" y="21" text-anchor="middle" font-size="10" font-weight="700" font-family="Liberation Sans" fill="#05122e">C++</text></svg></button>
 <button class="tb alert-on" aria-label="微信"><svg width="26" height="22"><ellipse cx="9" cy="9" rx="9" ry="8" fill="#2fca68"/><ellipse cx="18" cy="14" rx="7.500" ry="6.500" fill="#f0efee"/><g fill="#333"><circle cx="6" cy="7" r="1.200"/><circle cx="12" cy="7" r="1.200"/><circle cx="15.500" cy="12.500" r="1"/><circle cx="20.500" cy="12.500" r="1"/></g></svg></button>
 <button class="tb" aria-label="钉钉"><svg width="24" height="24"><rect width="24" height="24" rx="5" fill="#1189f7"/><path d="M5 4l11 6-1 4-2 0 1 1-4 6 1-5-3-1 2-1-4-3 3 0-4-4z" fill="#fff"/></svg></button>
 <button class="tb open" aria-label="Edge"><svg width="24" height="24"><circle cx="12" cy="12" r="12" fill="#1d83c9"/><path d="M1 8Q4 0 13 0q11 1 11 11-1 5-7 5-4-1-2-3 1-6-5-6-5 0-9 5z" fill="#41c88c"/><path d="M10 7q-5 5-1 11 5 5 12 1-4 6-11 5Q1 21 0 12 4 7 10 7z" fill="#1763ac"/></svg></button>
 <button class="tb" aria-label="Chrome"><svg width="24" height="24"><circle cx="12" cy="12" r="12" fill="#fbc31c"/><path d="M12 12L1.600 6A12 12 0 0 1 22.400 6z" fill="#e33b2e"/><path d="M12 12L1.600 6A12 12 0 0 0 12 24l5-9z" fill="#2ba24c"/><path d="M12 6h10.400" stroke="#e33b2e"/><circle cx="12" cy="12" r="6" fill="#fff"/><circle cx="12" cy="12" r="4.700" fill="#2f74e8"/></svg></button>
 <button class="tb" aria-label="知乎"><svg width="24" height="24"><rect width="24" height="24" rx="2" fill="#0a71f5"/><text x="12" y="18.500" text-anchor="middle" font-size="18" font-weight="700" font-family="Noto Sans CJK SC" fill="#fff">知</text></svg></button>
 <button class="tb open" aria-label="360浏览器"><svg width="24" height="24"><circle cx="12" cy="12" r="11" fill="#e6f4dc" stroke="#b6c4ae"/><path d="M5 13h13q1-7-6-7-7 1-7 7 1 6 7 6 4 0 6-3" fill="none" stroke="#6fce2c" stroke-width="3.500"/><path d="M1 20Q3 9 21 2" fill="none" stroke="#8bd94d" stroke-width="2"/></svg></button>
 <button class="tb" aria-label="哔哩哔哩"><svg width="24" height="24" fill="none" stroke="#12a9e6" stroke-width="3"><rect x="1.500" y="6.500" width="21" height="15" rx="3"/><path d="M6 1l4 5M18 1l-4 5M8 12v4M16 12v4"/></svg></button>
 <button class="tb open" aria-label="Typora"><svg width="24" height="24"><rect x="1" y="1" width="22" height="22" rx="4" fill="#fff"/><text x="12" y="18" text-anchor="middle" font-size="18" font-weight="700" font-family="Liberation Serif" fill="#333">T</text></svg></button>
 <button class="tb open" aria-label="压缩软件"><svg width="24" height="24"><path d="M0 2q0-2 2-2h6l2 2h12q2 0 2 2v15H0z" fill="#43b5f7"/><path d="M0 18h24v3H0z" fill="#ffb400"/><path d="M0 21h24v3H0z" fill="#ff7d00"/><path d="M15 3h5v21h-5z" fill="#9c4a12"/><path d="M14 16h7v5h-7z" fill="none" stroke="#fadb7c" stroke-width="1.500"/></svg></button>
 <button class="tb open" aria-label="记事本"><svg width="24" height="24"><path d="M3 2h20l-3 21H0z" fill="#96cfdf" stroke="#6b8890"/><path d="M4 2h19" stroke="#556" stroke-width="3" stroke-dasharray="2 1"/><path d="M4 8h16M4 11h15M3 14h15M3 17h15" stroke="#7ab4c5"/></svg></button>
 <button class="tb open" aria-label="设置"><svg width="22" height="22" fill="none" stroke="#454545"><circle cx="11" cy="11" r="6" stroke-width="3"/><circle cx="11" cy="11" r="8.800" stroke-width="3" stroke-dasharray="3.400 3.500"/></svg></button>
 <button class="tb open" aria-label="飞书"><svg width="24" height="24"><rect width="24" height="24" rx="4" fill="#4285f6"/><path d="M3 7l9 5 4-8 1 6 4 1-4 2q-1 8-9 7 4-1 4-3-6 0-7-5 2 1 4 0-5-1-6-5z" fill="#fff"/></svg></button>
 <button class="tb open front" aria-label="VMware"><svg width="24" height="24" class="me-1"><use href="#vmw"/></svg></button>
 <div class="trayt" style="width:92px">51℃<br>CPU温度</div>
 <div class="news d-flex align-items-center"><svg width="34" height="36"><path d="M1 3h27v7l5 2v7h-4v4H3v-6H0V10l3-1z" fill="#fba02d"/><path d="M1 5q13 6 27 0M4 12q13 6 28 0M2 18q13 5 26 0" fill="none" stroke="#e4740e" stroke-width="2"/><path d="M11 26l6 7 6-7" fill="none" stroke="#5cc11f" stroke-width="4"/></svg><span>USD/...</span></div>
 <div class="trayicons d-flex align-items-center justify-content-between">
  <svg width="18" height="10" fill="none" stroke="#000" stroke-width="1.500"><path d="M1 9l8-8 8 8"/></svg>
  <svg width="19" height="25" color="#f02bb8"><use href="#penguin"/><path d="M11 1l8-1-2 5z" fill="#f02bb8"/></svg>
  <svg width="19" height="18" fill="none" stroke="#333" stroke-width="1.500"><path d="M1 17Q3 3 18 1M6 17Q7 8 18 6M11 17q1-5 7-6"/><circle cx="17" cy="16" r="1.500" fill="#000"/></svg>
  <svg width="22" height="18" fill="none" stroke="#111" stroke-width="1.400"><path d="M1 6h3l5-5v16l-5-5H1zM13 6l7 7M20 6l-7 7"/></svg>
  <svg width="24" height="17" fill="none" stroke="#111" stroke-width="1.500"><path d="M8 4h13v11H6V9M22.500 7v4M1 3h6v3q0 2-3 2t-3-2zM2 0v3M6 0v3M4 8v3h4"/><path d="M10 6h8v7h-8z" fill="#111"/></svg>
  <svg width="22" height="24" fill="none"><path d="M2 7h18v9H2zM11 0v24" stroke="#333" stroke-width="4"/><path d="M2 7h18v9H2zM11 1v22" stroke="#fff" stroke-width="2"/></svg>
  <svg width="24" height="23"><path d="M0 4L20 0l4 18-19 5z" fill="#f4511e"/><text x="12" y="19" text-anchor="middle" font-family="Lato" font-weight="900" font-size="21" fill="#fff">S</text></svg>
 </div>
 <div class="trayt mx-2" style="width:126px">21:59<br>2023/8/5</div>
 <button class="ms-1" aria-label="通知"><svg width="24" height="24"><path d="M0 0h24v19h-9l-4 5-3-5H0z"/><path d="M5 5.500h14M5 9.500h14M5 13.500h9" stroke="#dde6d0"/></svg></button>
 <i class="vsep h-100 ms-auto me-1" style="background:#aab39f"></i>
</footer>
</body>
</html>
